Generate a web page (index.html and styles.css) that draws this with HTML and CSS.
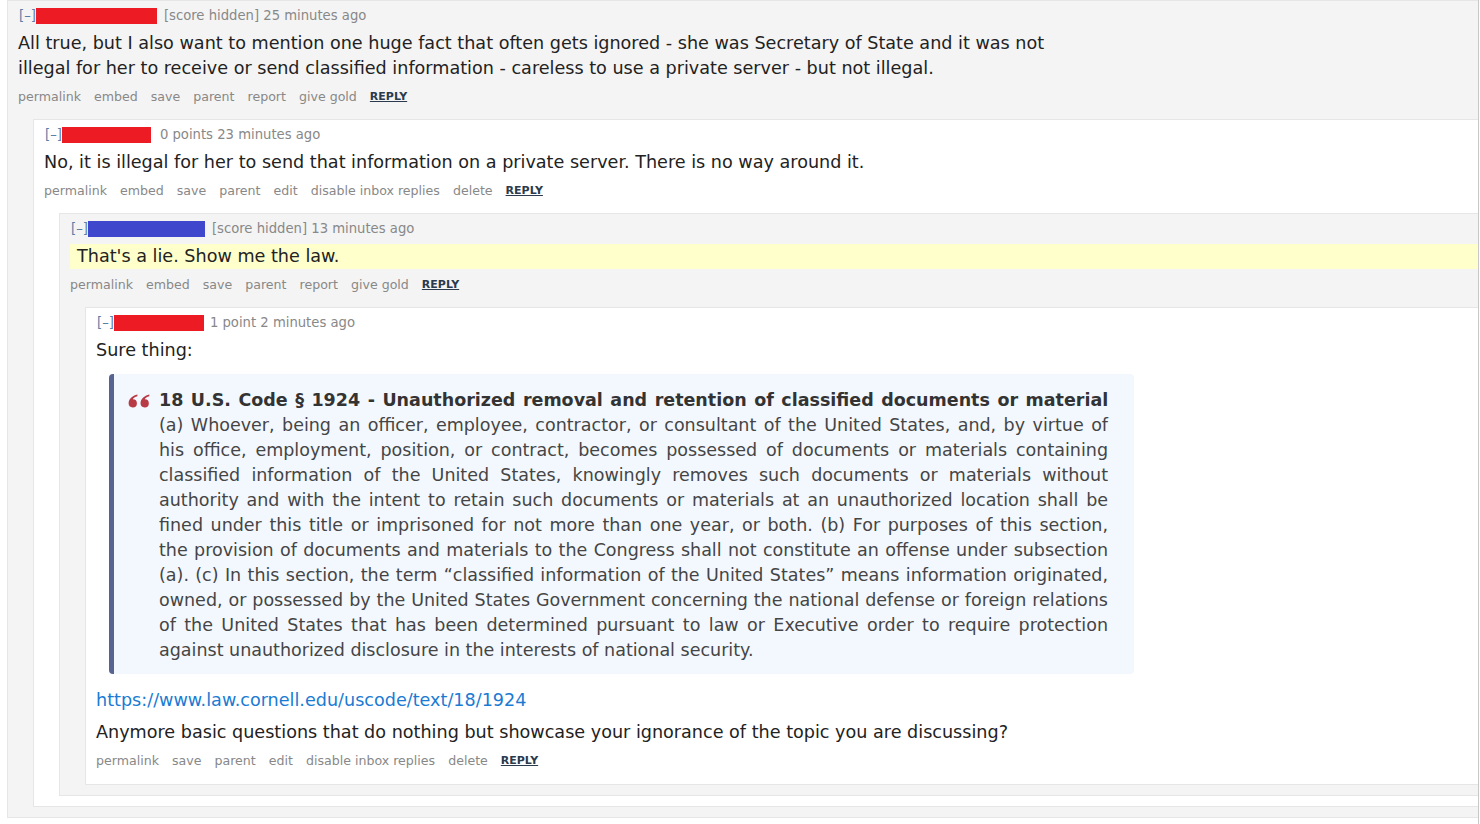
FILE: index.html
```html
<!DOCTYPE html>
<html>
<head>
<meta charset="utf-8">
<link rel="stylesheet" href="styles.css">
</head>
<body>
<div class="page">
  <div class="comment odd">
    <div class="entry">
      <p class="tagline"><span class="expand">[–]</span><span class="redact red r1"></span><span class="score">[score hidden]</span> <span class="time">25 minutes ago</span></p>
      <div class="usertext"><div class="md"><p>All true, but I also want to mention one huge fact that often gets ignored - she was Secretary of State and it was not illegal for her to receive or send classified information - careless to use a private server - but not illegal.</p></div></div>
      <ul class="buttons"><li>permalink</li><li>embed</li><li>save</li><li>parent</li><li>report</li><li>give gold</li><li class="reply">reply</li></ul>
    </div>
    <div class="child">
      <div class="comment even">
        <div class="entry">
          <p class="tagline"><span class="expand">[–]</span><span class="redact red r2"></span><span class="score">0 points</span> <span class="time">23 minutes ago</span></p>
          <div class="usertext"><div class="md"><p>No, it is illegal for her to send that information on a private server. There is no way around it.</p></div></div>
          <ul class="buttons"><li>permalink</li><li>embed</li><li>save</li><li>parent</li><li>edit</li><li>disable inbox replies</li><li>delete</li><li class="reply">reply</li></ul>
        </div>
        <div class="child">
          <div class="comment odd">
            <div class="entry">
              <p class="tagline"><span class="expand">[–]</span><span class="redact blue r3"></span><span class="score">[score hidden]</span> <span class="time">13 minutes ago</span></p>
              <div class="usertext new"><div class="md"><p>That's a lie. Show me the law.</p></div></div>
              <ul class="buttons"><li>permalink</li><li>embed</li><li>save</li><li>parent</li><li>report</li><li>give gold</li><li class="reply">reply</li></ul>
            </div>
            <div class="child">
              <div class="comment even last">
                <div class="entry">
                  <p class="tagline"><span class="expand">[–]</span><span class="redact red r4"></span><span class="score">1 point</span> <span class="time">2 minutes ago</span></p>
                  <div class="usertext"><div class="md">
                    <p>Sure thing:</p>
                    <blockquote>
                      <svg class="quote-icon" viewBox="0 0 22 13.5" width="23" height="14" aria-hidden="true"><path d="M9 0.5C4 1.6 0.5 5 0.5 9A4 4 0 1 0 4.6 5C5.2 3.6 6.6 2.6 9 2.1Z"/><path d="M20.5 0.5C15.5 1.6 12 5 12 9A4 4 0 1 0 16.1 5C16.7 3.6 18.1 2.6 20.5 2.1Z"/></svg>
                      <p class="law">
                        <strong class="ln">18 U.S. Code § 1924 - Unauthorized removal and retention of classified documents or material</strong>
                        <span class="ln">(a) Whoever, being an officer, employee, contractor, or consultant of the United States, and, by virtue of</span>
                        <span class="ln">his office, employment, position, or contract, becomes possessed of documents or materials containing</span>
                        <span class="ln">classified information of the United States, knowingly removes such documents or materials without</span>
                        <span class="ln">authority and with the intent to retain such documents or materials at an unauthorized location shall be</span>
                        <span class="ln">fined under this title or imprisoned for not more than one year, or both. (b) For purposes of this section,</span>
                        <span class="ln">the provision of documents and materials to the Congress shall not constitute an offense under subsection</span>
                        <span class="ln">(a). (c) In this section, the term “classified information of the United States” means information originated,</span>
                        <span class="ln">owned, or possessed by the United States Government concerning the national defense or foreign relations</span>
                        <span class="ln">of the United States that has been determined pursuant to law or Executive order to require protection</span>
                        <span class="ln last">against unauthorized disclosure in the interests of national security.</span>
                      </p>
                    </blockquote>
                    <p><a href="#">https://www.law.cornell.edu/uscode/text/18/1924</a></p>
                    <p>Anymore basic questions that do nothing but showcase your ignorance of the topic you are discussing?</p>
                  </div></div>
                  <ul class="buttons"><li>permalink</li><li>save</li><li>parent</li><li>edit</li><li>disable inbox replies</li><li>delete</li><li class="reply">reply</li></ul>
                </div>
              </div>
            </div>
          </div>
        </div>
      </div>
    </div>
  </div>
</div>
</body>
</html>
```

FILE: styles.css
```css
html, body {
  margin: 0;
  padding: 0;
  background: #ffffff;
}

body {
  font-family: "DejaVu Sans", Verdana, sans-serif;
  color: #222222;
}

.page {
  width: 1479px;
  min-height: 824px;
  border-right: 1px solid #c8c8c8;
  padding-left: 7px;
  box-sizing: border-box;
}

.comment {
  border: 1px solid #e6e6e6;
  border-right: none;
  padding: 5px 0 10px 10px;
}

.comment.odd {
  background: #f4f4f4;
}

.comment.even {
  background: #ffffff;
}

.child {
  margin: 9px 0 0 15px;
}

.entry {
  padding-bottom: 5px;
}

.tagline {
  margin: 0;
  padding-left: 1px;
  height: 19px;
  line-height: 19px;
  font-size: 13.2px;
  color: #888888;
  white-space: nowrap;
}

.expand {
  color: #5a7fa6;
}

.redact {
  display: inline-block;
  height: 16px;
  vertical-align: -4px;
  margin-right: 7px;
}

.red { background: #ed1c24; }
.blue { background: #3f48cc; }

.r1 { width: 121px; }
.r2 { width: 89px; margin-right: 9px; }
.r3 { width: 117px; }
.r4 { width: 90px; margin-right: 6px; }

.usertext {
  margin-top: 6px;
}

.usertext.new {
  background: #ffffcc;
  padding-left: 7px;
}

.md {
  max-width: 1038px;
  font-size: 17.6px;
  line-height: 25px;
  color: #222222;
}

.md p {
  margin: 0;
}

.md p + p {
  margin-top: 7px;
}

.md a {
  color: #1a7bd3;
  text-decoration: none;
}

blockquote {
  position: relative;
  margin: 11px 0 14px 13px;
  padding: 14px 26px 11px 45px;
  background: #f3f8fe;
  border-left: 5px solid #576491;
  border-radius: 4px;
  color: #454545;
}

.law {
  font-size: 17.5px;
}

.law .ln {
  display: block;
  text-align: justify;
  text-align-last: justify;
  white-space: nowrap;
}

.law .ln.last {
  text-align-last: left;
}

.law strong.ln {
  color: #333333;
  text-align-last: left;
  word-spacing: 1.4px;
}

.quote-icon {
  position: absolute;
  left: 14px;
  top: 20px;
  fill: #b83a45;
}

.buttons {
  list-style: none;
  margin: 6px 0 0;
  padding: 0;
  display: flex;
  align-items: center;
  gap: 13px;
  height: 18px;
  font-size: 12.6px;
  color: #888888;
}

.buttons .reply {
  font-size: 11px;
  font-weight: bold;
  text-transform: uppercase;
  text-decoration: underline;
  color: #2b3a4c;
}
```
